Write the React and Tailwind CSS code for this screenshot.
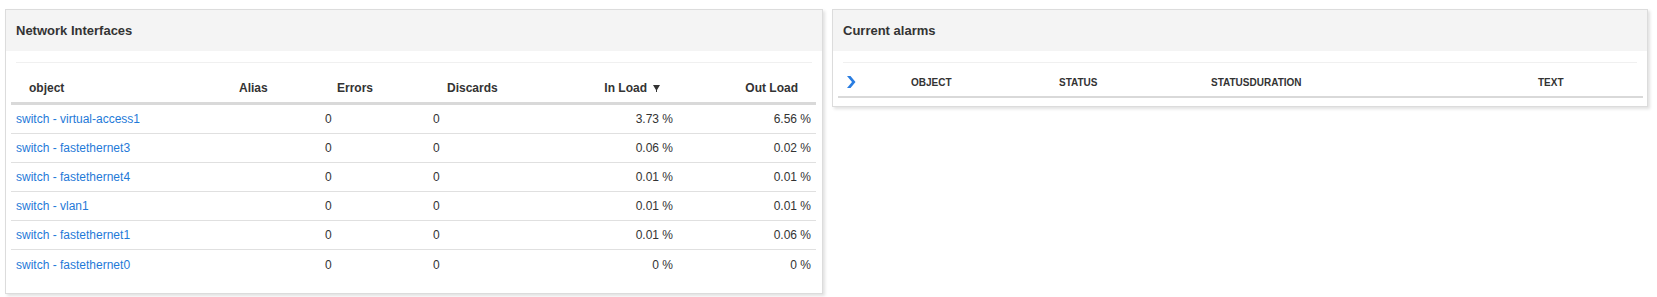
const rows = [
  { name: 'switch - virtual-access1', errors: '0', discards: '0', inLoad: '3.73 %', outLoad: '6.56 %' },
  { name: 'switch - fastethernet3', errors: '0', discards: '0', inLoad: '0.06 %', outLoad: '0.02 %' },
  { name: 'switch - fastethernet4', errors: '0', discards: '0', inLoad: '0.01 %', outLoad: '0.01 %' },
  { name: 'switch - vlan1', errors: '0', discards: '0', inLoad: '0.01 %', outLoad: '0.01 %' },
  { name: 'switch - fastethernet1', errors: '0', discards: '0', inLoad: '0.01 %', outLoad: '0.06 %' },
  { name: 'switch - fastethernet0', errors: '0', discards: '0', inLoad: '0 %', outLoad: '0 %' },
];

const cols = 'grid grid-cols-[209px_90px_110px_120px_140px_1fr]';

function Panel({ title, children, className = '' }) {
  return (
    <div className={`bg-white border border-[#dcdcdc] shadow-[2px_2px_3px_rgba(0,0,0,0.12)] ${className}`}>
      <div className="h-[41px] bg-[#f4f4f4] flex items-center pl-[10px] text-[13px] font-bold text-[#333]">
        {title}
      </div>
      {children}
    </div>
  );
}

export default function App() {
  return (
    <div className="w-[1657px] h-[297px] bg-white flex items-start gap-[9px] pl-[5px] pt-[9px] font-['Liberation_Sans',Arial,sans-serif] text-[#333]">
      <Panel title="Network Interfaces" className="w-[818px] pb-[14px]">
        <div className="mt-[11px] mx-[10px] border-t border-[#f0f0f0]" />
        <div className="ml-[5px] mr-[6px]">
          <div className={`${cols} h-[42px] items-center text-[12px] font-bold border-b-[3px] border-[#d9d9d9]`}>
            <div className="pl-[18px] pt-[10px]">object</div>
            <div className="pl-[19px] pt-[10px]">Alias</div>
            <div className="pl-[27px] pt-[10px]">Errors</div>
            <div className="pl-[27px] pt-[10px]">Discards</div>
            <div className="pr-[20px] pt-[10px] flex items-center justify-end gap-[6px]">
              In Load
              <svg width="7" height="7" viewBox="0 0 7 7" className="mt-[1px]">
                <path d="M0 0H7L4 5V7H3V5Z" fill="#333" />
              </svg>
            </div>
            <div className="pr-[18px] pt-[10px] text-right">Out Load</div>
          </div>
          {rows.map((r, i) => (
            <div
              key={r.name}
              className={`${cols} h-[29px] items-center text-[12px] ${i < rows.length - 1 ? 'border-b border-[#e0e0e0]' : ''}`}
            >
              <a className="pl-[5px] text-[#1f7ad8]">{r.name}</a>
              <div />
              <div className="pl-[15px]">{r.errors}</div>
              <div className="pl-[13px]">{r.discards}</div>
              <div className="pr-[7px] text-right">{r.inLoad}</div>
              <div className="pr-[5px] text-right">{r.outLoad}</div>
            </div>
          ))}
        </div>
      </Panel>

      <Panel title="Current alarms" className="w-[816px] pb-[8px]">
        <div className="mt-[11px] mx-[10px] border-t border-[#f0f0f0]" />
        <div className="ml-[5px] mr-[4px] grid grid-cols-[73px_148px_152px_327px_1fr] h-[35px] items-center text-[10px] font-bold uppercase border-b-2 border-[#d9d9d9]">
          <div className="pl-[8px] pt-[5px]">
            <svg width="10" height="12" viewBox="0 0 10 12" className="block">
              <path d="M1 0H4.5L9.5 6L4.5 12H1L6 6Z" fill="#2a7de1" />
            </svg>
          </div>
          <div className="pt-[5px]">OBJECT</div>
          <div className="pt-[5px]">STATUS</div>
          <div className="pt-[5px]">STATUSDURATION</div>
          <div className="pt-[5px]">TEXT</div>
        </div>
      </Panel>
    </div>
  );
}
